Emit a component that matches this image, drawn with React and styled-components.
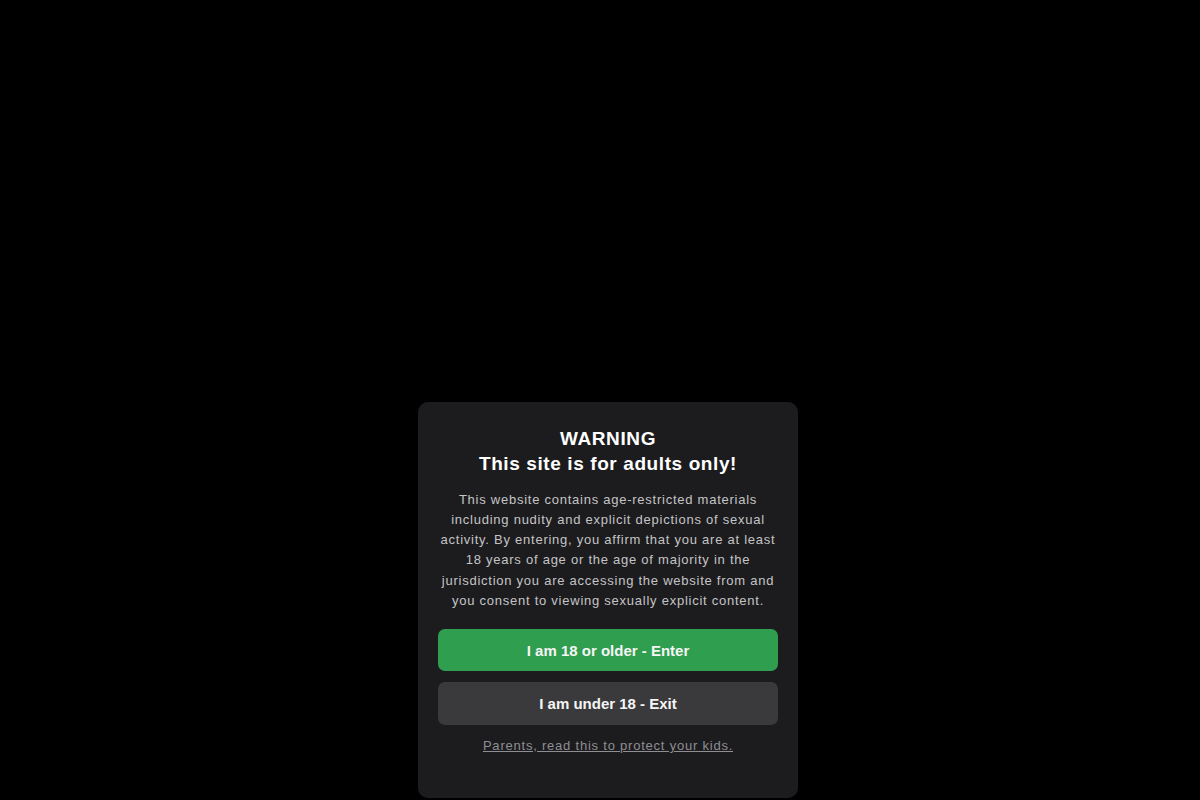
import React from "react";
import styled, { createGlobalStyle } from "styled-components";

const GlobalStyle = createGlobalStyle`
  html, body {
    margin: 0;
    padding: 0;
    background: #000;
    font-family: "Liberation Sans", Arial, sans-serif;
  }
`

const Page = styled.div`
  display: flex;
  flex-direction: column;
  justify-content: flex-end;
  align-items: center;
  height: 100vh;
  padding-bottom: 2px;
  box-sizing: border-box;
  margin-left: 16px;
`

const Card = styled.div`
  display: flex;
  flex-direction: column;
  align-items: stretch;
  width: 380px;
  box-sizing: border-box;
  padding: 24px 20px 43px;
  background: #1c1c1e;
  border-radius: 10px;
  text-align: center;
`

const Title = styled.h1`
  margin: 0;
  font-size: 19px;
  line-height: 25px;
  font-weight: 700;
  color: #fff;
  letter-spacing: 0.6px;
`

const Text = styled.p`
  margin: 14px 0 18px;
  font-size: 13px;
  line-height: 20.2px;
  color: #c4c4c6;
  letter-spacing: 0.75px;
`

const Button = styled.button`
  height: ${props => props.h}px;
  margin-bottom: 11px;
  border: none;
  border-radius: 7px;
  background: ${props => props.primary ? "#2f9e4f" : "#3a3a3c"};
  color: #f5f5f5;
  font-family: "Liberation Sans", Arial, sans-serif;
  font-size: 15px;
  font-weight: 700;
  cursor: pointer;
`

const ParentsLink = styled.a`
  margin-top: 1px;
  font-size: 13px;
  line-height: 18px;
  color: #8e8e93;
  letter-spacing: 0.78px;
  text-decoration: underline;
`

function App() {
    return (
        <>
            <GlobalStyle/>
            <Page>
                <Card>
                    <Title>WARNING<br/>This site is for adults only!</Title>
                    <Text>
                        This website contains age-restricted materials including nudity and explicit depictions of
                        sexual activity. By entering, you affirm that you are at least 18 years of age or the age of
                        majority in the jurisdiction you are accessing the website from and you consent to viewing
                        sexually explicit content.
                    </Text>
                    <Button primary h={42}>I am 18 or older - Enter</Button>
                    <Button h={43}>I am under 18 - Exit</Button>
                    <ParentsLink href="#">Parents, read this to protect your kids.</ParentsLink>
                </Card>
            </Page>
        </>
    );
}

export default App;
